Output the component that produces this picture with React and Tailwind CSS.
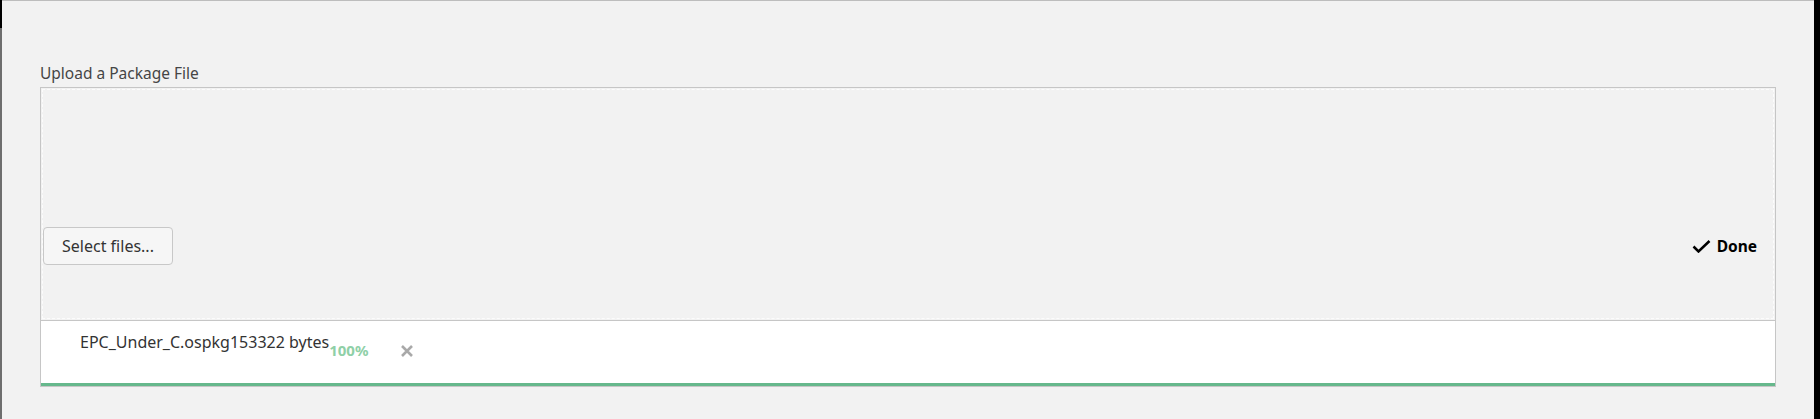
import React from 'react';

function CheckMark() {
  return (
    <svg width="19" height="13" viewBox="0 0 19 13" fill="none">
      <path d="M1.5 6.5 L6.5 11.5 L17.5 1" stroke="#000" strokeWidth="2.5" />
    </svg>
  );
}

function RemoveIcon() {
  return (
    <svg width="12" height="12" viewBox="0 0 12 12" fill="none">
      <path d="M1 1 L11 11 M11 1 L1 11" stroke="#a9a9a9" strokeWidth="2.6" />
    </svg>
  );
}

export default function App() {
  return (
    <div
      className="flex w-[1820px] h-[419px] bg-[#f2f2f2] text-[#333]"
      style={{ fontFamily: '"Noto Sans", "Open Sans", Arial, sans-serif' }}
    >
      {/* left window edge */}
      <div className="flex flex-col w-[2px] shrink-0">
        <div className="h-[28px] bg-black" />
        <div className="flex-1 bg-[#6e6e6e]" />
      </div>

      <div className="flex-1 border-t border-[#bdbdbd] pl-[38px] pt-[62px]">
        <label className="block text-[15.5px] leading-[20px] text-[#454545] mb-[4px]">
          Upload a Package File
        </label>

        <div className="w-[1736px] border border-[#c6c6c6] bg-[#f2f2f2]">
          {/* drop zone */}
          <div className="h-[232px] p-px">
            <div className="h-full border border-dashed border-[#fcfcfc] pt-[137px] pr-[16px]">
              <div className="flex items-center justify-between">
                <button className="w-[130px] h-[38px] rounded-[4px] border border-[#c8c8c8] bg-[#f6f6f6] text-[16px] text-[#333]">
                  Select files...
                </button>
                <div className="flex items-center gap-[6px] pt-px text-[15.5px] font-bold text-black">
                  <CheckMark />
                  <span>Done</span>
                </div>
              </div>
            </div>
          </div>

          {/* file list */}
          <div className="border-t border-[#c6c6c6] bg-white">
            <div className="h-[62px] pl-[39px] pt-[11px] flex items-start">
              <span className="text-[16px] leading-[20px] text-[#333]">
                EPC_Under_C.ospkg<span>153322 bytes</span>
              </span>
              <span className="mt-[8px] text-[15px] leading-[20px] font-bold text-[#8fd0a7]">100%</span>
              <span className="ml-[33px] mt-[13px] flex">
                <RemoveIcon />
              </span>
            </div>
            <div className="h-[3px] bg-[#66b88c]" />
          </div>
        </div>
      </div>

      {/* right window edge */}
      <div className="w-[6px] shrink-0 bg-black" />
    </div>
  );
}
